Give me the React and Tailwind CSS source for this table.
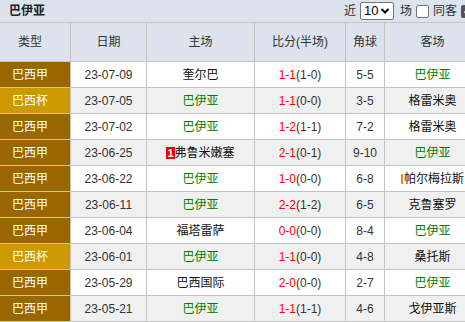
const rows = [
  { type: '巴西甲', date: '23-07-09', home: '奎尔巴', ft: '1-1', ht: '(1-0)', corner: '5-5', away: '巴伊亚', hg: false, ag: true },
  { type: '巴西杯', date: '23-07-05', home: '巴伊亚', ft: '1-1', ht: '(0-0)', corner: '3-5', away: '格雷米奥', hg: true },
  { type: '巴西甲', date: '23-07-02', home: '巴伊亚', ft: '1-2', ht: '(1-1)', corner: '7-2', away: '格雷米奥', hg: true },
  { type: '巴西甲', date: '23-06-25', home: '弗鲁米嫩塞', ft: '2-1', ht: '(0-1)', corner: '9-10', away: '巴伊亚', ag: true, redHome: '1' },
  { type: '巴西甲', date: '23-06-22', home: '巴伊亚', ft: '1-0', ht: '(0-0)', corner: '6-8', away: '帕尔梅拉斯', hg: true, yellowAway: true },
  { type: '巴西甲', date: '23-06-11', home: '巴伊亚', ft: '2-2', ht: '(1-2)', corner: '6-5', away: '克鲁塞罗', hg: true },
  { type: '巴西甲', date: '23-06-04', home: '福塔雷萨', ft: '0-0', ht: '(0-0)', corner: '8-4', away: '巴伊亚', ag: true },
  { type: '巴西杯', date: '23-06-01', home: '巴伊亚', ft: '1-1', ht: '(0-0)', corner: '4-8', away: '桑托斯', hg: true },
  { type: '巴西甲', date: '23-05-29', home: '巴西国际', ft: '2-0', ht: '(0-0)', corner: '2-7', away: '巴伊亚', ag: true },
  { type: '巴西甲', date: '23-05-21', home: '巴伊亚', ft: '1-1', ht: '(1-1)', corner: '4-6', away: '戈伊亚斯', hg: true },
]

const cell = 'flex items-center justify-center border-r border-[#c4c4c4]'

export default function App() {
  return (
    <div className="w-[465px] h-[322px] overflow-hidden bg-white text-[12px] text-[#333]"
      style={{ fontFamily: '"Liberation Sans", "Noto Sans CJK SC", sans-serif' }}>
      <div className="w-[481px]">
        {/* 标题栏 */}
        <div className="h-[23px] flex items-center bg-[#dce3ed] border-b border-[#c4c4c4] pl-[9px] pr-[7px]">
          <span className="font-bold text-[#222]">巴伊亚</span>
          <div className="ml-auto flex items-center">
            <span className="mr-[4px]">近</span>
            <div className="w-[34px] h-[18px] bg-white border border-[#767676] rounded-[2px] flex items-center pl-[3px] text-[13px] text-black">
              10
              <svg width="10" height="8" viewBox="0 0 10 8" className="ml-[2px]">
                <path d="M1.5 2 L5 5.5 L8.5 2" stroke="#000" strokeWidth="2" fill="none" />
              </svg>
            </div>
            <span className="ml-[6px]">场</span>
            <span className="ml-[4px] w-[13px] h-[13px] border border-[#767676] rounded-[2px] bg-white" />
            <span className="ml-[4px]">同客</span>
            <span className="ml-[4px] w-[13px] h-[13px] rounded-[2px] bg-[#555] flex items-center justify-center">
              <svg width="9" height="9" viewBox="0 0 9 9"><path d="M1.5 4.5 L3.7 6.7 L7.5 2" stroke="#fff" strokeWidth="1.6" fill="none" /></svg>
            </span>
          </div>
        </div>

        {/* 表头 */}
        <div className="flex h-[39px] bg-[#dce3ed] border-b border-[#c4c4c4]">
          <div className={`${cell} w-[71px] pr-[10px]`}>类型</div>
          <div className={`${cell} w-[76px]`}>日期</div>
          <div className={`${cell} w-[108px]`}>主场</div>
          <div className={`${cell} w-[91px]`}>比分(半场)</div>
          <div className={`${cell} w-[39px]`}>角球</div>
          <div className={`${cell} w-[96px]`}>客场</div>
        </div>

        {rows.map((r, i) => (
          <div key={i} className={`flex h-[26px] border-b border-[#c4c4c4] ${i % 2 ? 'bg-[#f0f0f0]' : 'bg-white'}`}>
            <div className={`${cell} w-[71px] pr-[10px] text-white ${r.type === '巴西杯' ? 'bg-[#cc9900]' : 'bg-[#996600]'}`}>{r.type}</div>
            <div className={`${cell} w-[76px]`}>{r.date}</div>
            <div className={`${cell} w-[108px] ${r.hg ? 'text-[#008000]' : 'text-[#111]'}`}>
              {r.redHome && (
                <span className="bg-[#ee0000] text-white font-bold text-[11px] leading-[12px] px-[1px]">{r.redHome}</span>
              )}
              {r.home}
            </div>
            <div className={`${cell} w-[91px]`}>
              <span className="text-[#ff0000]">{r.ft}</span>{r.ht}
            </div>
            <div className={`${cell} w-[39px]`}>{r.corner}</div>
            <div className={`${cell} w-[96px] ${r.ag ? 'text-[#008000]' : 'text-[#111]'}`}>
              {r.yellowAway && <span className="w-[2px] h-[10px] bg-[#e08a2a] mr-[1px]" />}
              {r.away}
            </div>
          </div>
        ))}
      </div>
    </div>
  )
}
